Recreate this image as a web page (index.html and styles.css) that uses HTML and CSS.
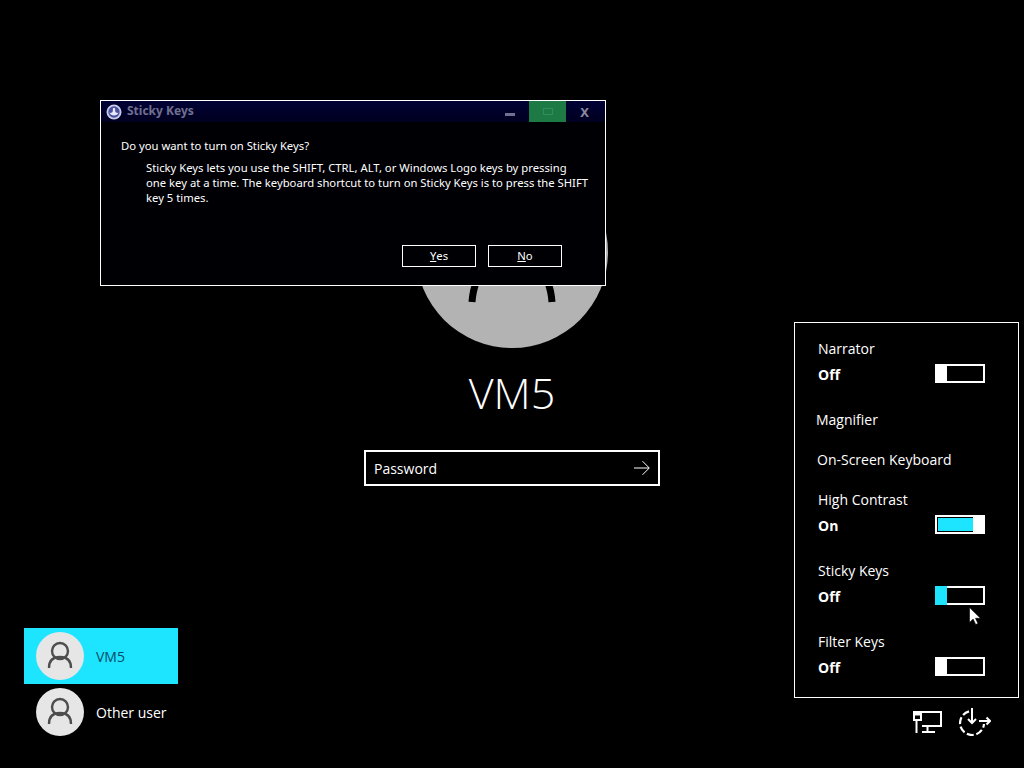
FILE: index.html
```html
<!DOCTYPE html>
<html lang="en">
<head>
<meta charset="utf-8">
<title>Sign in</title>
<link rel="stylesheet" href="styles.css">
</head>
<body>
<div class="screen">
  <aside class="users">
    <div class="user user-active">
      <span class="user-pic"><svg viewBox="0 0 48 48" width="48" height="48"><circle cx="24" cy="19" r="8" fill="none" stroke="#4d4d4d" stroke-width="2.4"/><path d="M13 36c0-8 4-11 11-11s11 3 11 11" fill="none" stroke="#4d4d4d" stroke-width="2.4"/></svg></span>
      <span class="user-name">VM5</span>
    </div>
    <div class="user">
      <span class="user-pic"><svg viewBox="0 0 48 48" width="48" height="48"><circle cx="24" cy="19" r="8" fill="none" stroke="#4d4d4d" stroke-width="2.4"/><path d="M13 36c0-8 4-11 11-11s11 3 11 11" fill="none" stroke="#4d4d4d" stroke-width="2.4"/></svg></span>
      <span class="user-name">Other user</span>
    </div>
  </aside>

  <main class="signin">
    <svg class="avatar" viewBox="0 0 192 192" width="192" height="192">
      <circle cx="96" cy="96" r="96" fill="#b3b3b3"/>
      <path d="M56 146C57 132 62 118 72 108M136 146C135 132 130 118 120 108" fill="none" stroke="#000" stroke-width="7"/>
    </svg>
    <h1 class="account">VM5</h1>
    <div class="password">
      <span>Password</span>
      <svg viewBox="0 0 16 16" width="16" height="16"><path d="M0 8h15M8.500 1.200 15.300 8l-6.800 6.800" fill="none" stroke="#fff" stroke-width="1"/></svg>
    </div>
  </main>

  <aside class="side">
    <section class="panel">
      <div class="item">
        <div class="item-label">Narrator</div>
        <div class="item-row"><b>Off</b><span class="toggle"><i class="thumb"></i></span></div>
      </div>
      <div class="link link-mag">Magnifier</div>
      <div class="link link-osk">On-Screen Keyboard</div>
      <div class="item">
        <div class="item-label">High Contrast</div>
        <div class="item-row"><b>On</b><span class="toggle toggle-on"><i class="thumb"></i></span></div>
      </div>
      <div class="item">
        <div class="item-label">Sticky Keys</div>
        <div class="item-row"><b>Off</b><span class="toggle toggle-hover"><i class="thumb"></i></span></div>
      </div>
      <div class="item">
        <div class="item-label">Filter Keys</div>
        <div class="item-row"><b>Off</b><span class="toggle"><i class="thumb"></i></span></div>
      </div>
    </section>
    <div class="tray">
      <svg viewBox="0 0 32 28" width="32" height="28" fill="none" stroke="#fff" stroke-width="2">
        <path d="M9 4h20v14H10"/>
        <path d="M2 4h7v8H2z" stroke-width="2"/>
        <path d="M2 6h7" stroke-width="3"/>
        <path d="M4.500 12v13M10 24h13M15.500 18v6"/>
      </svg>
      <svg viewBox="0 0 32 28" width="32" height="28" fill="none" stroke="#fff" stroke-width="2.200">
        <path d="M10 3.400A12 12 0 1 0 25 16" stroke-dasharray="7 2.700"/>
        <path d="M13 0v15M9 11l4 4 4-4" stroke-width="2"/>
        <path d="M20 13h11M27.500 9.500 31 13l-3.500 3.500" stroke-width="2"/>
      </svg>
    </div>
  </aside>

  <section class="dialog">
    <header class="titlebar">
      <svg class="title-icon" viewBox="0 0 16 16" width="16" height="16">
        <circle cx="8" cy="8" r="7.500" fill="#c9cde8"/>
        <circle cx="8" cy="8" r="5.700" fill="#4a50a0"/>
        <path d="M3.500 8.500c1 4 8 4 9 0-1 .8-2.500.5-3.200-1L9 4H7l-.3 3.500C6 9 4.500 9.300 3.500 8.500z" fill="#e6e8f8"/>
      </svg>
      <span class="title-text">Sticky Keys</span>
      <span class="win-min"></span>
      <span class="win-max"><i></i></span>
      <span class="win-close">X</span>
    </header>
    <div class="dialog-body">
      <p class="question">Do you want to turn on Sticky Keys?</p>
      <p class="explain">Sticky Keys lets you use the SHIFT, CTRL, ALT, or Windows Logo keys by pressing<br>one key at a time. The keyboard shortcut to turn on Sticky Keys is to press the SHIFT<br>key 5 times.</p>
    </div>
    <div class="dialog-actions">
      <span class="btn"><u>Y</u>es</span>
      <span class="btn"><u>N</u>o</span>
    </div>
  </section>

  <svg class="cursor" viewBox="0 0 12 18" width="12" height="18"><path d="M.5.5v15l3.600-3.400 2.600 5.400 2.300-1-2.500-5.200h5z" fill="#fff" stroke="#000" stroke-width=".6"/></svg>
</div>
</body>
</html>
```
FILE: styles.css
```css
* { box-sizing: border-box; }
html, body { margin: 0; padding: 0; background: #000; }
body { font-family: "Open Sans", "Noto Sans", sans-serif; color: #fff; }

.screen {
  position: relative;
  width: 1024px;
  height: 768px;
  overflow: hidden;
  display: grid;
  grid-template-columns: 364px 296px 364px;
  background: #000;
}

/* user list */
.users {
  align-self: end;
  padding: 0 0 28px 24px;
  display: flex;
  flex-direction: column;
}
.user {
  width: 154px;
  height: 56px;
  padding-left: 12px;
  display: flex;
  align-items: center;
  gap: 12px;
  font-size: 14px;
}
.user-active { background: #1de5ff; color: #0a4a68; }
.user-pic {
  width: 48px;
  height: 48px;
  border-radius: 50%;
  background: #e6e6e6;
  display: block;
}
.user-pic svg { display: block; }

/* centre column */
.signin {
  padding-top: 156px;
  display: flex;
  flex-direction: column;
  align-items: center;
}
.avatar { display: block; }
.account {
  margin: 16px 0 0;
  height: 60px;
  font-size: 43px;
  line-height: 58px;
  font-weight: 300;
}
.password {
  margin-top: 26px;
  width: 296px;
  height: 36px;
  border: 2px solid #fff;
  padding: 0 8px 0 8px;
  display: flex;
  align-items: center;
  justify-content: space-between;
  font-size: 14px;
}
.password svg { display: block; }

/* accessibility flyout */
.side {
  padding: 322px 5px 0 134px;
  display: flex;
  flex-direction: column;
}
.panel {
  height: 376px;
  border: 1px solid #fff;
  padding: 16px 33px 0 23px;
  font-size: 14px;
}
.item { height: 71px; }
.item-label { height: 20px; line-height: 20px; }
.item-row {
  margin-top: 4px;
  display: flex;
  justify-content: space-between;
  align-items: center;
  height: 22px;
}
.item-row b { font-weight: 700; }
.link { height: 40px; line-height: 20px; }
.link-mag { margin-left: -2px; }
.link-osk { margin-left: -1px; }

.toggle {
  display: block;
  position: relative;
  align-self: flex-start;
  margin-top: 1px;
  width: 50px;
  height: 19px;
  border: 2px solid #fff;
}
.thumb {
  position: absolute;
  left: -2px;
  top: -2px;
  width: 12px;
  height: 19px;
  background: #fff;
}
.toggle-on { background: #1de5ff; box-shadow: inset 0 0 0 1px #000; }
.toggle-on .thumb { left: auto; right: -2px; }
.toggle-hover .thumb { background: #1de5ff; }

.tray {
  margin-top: 10px;
  padding-left: 118px;
  display: flex;
  gap: 15px;
  align-items: flex-start;
}
.tray svg { display: block; }

/* dialog window */
.dialog {
  position: absolute;
  left: 100px;
  top: 100px;
  width: 506px;
  height: 186px;
  border: 1px solid #fff;
  background: #000004;
  font-size: 11.27px;
  font-family: "Noto Sans", "Open Sans", sans-serif;
}
.titlebar {
  height: 21px;
  background: linear-gradient(#000035, #000020);
  display: flex;
  align-items: center;
  padding: 0 0 0 5px;
  color: #70708f;
  font-size: 12px;
}
.title-icon { display: block; }
.title-text { margin-left: 5px; font-weight: 700; flex: 1; padding-bottom: 2px; }
.win-min { width: 10px; height: 3px; background: #70708f; margin: 5px 14px 0 0; }
.win-max {
  width: 37px;
  height: 21px;
  background: #1d7a45;
  display: flex;
  align-items: center;
  justify-content: center;
}
.win-max i { width: 10px; height: 7px; border: 1px solid #2f8f5a; display: block; }
.win-close { width: 37px; text-align: center; font-weight: 700; font-size: 13px; margin-right: 2px; color: #8a8a9e; }
.dialog-body { padding: 16px 0 0 20px; }
.question { margin: 0; line-height: 16px; }
.explain { margin: 6px 0 0 25px; line-height: 15px; white-space: nowrap; }
.dialog-actions {
  position: absolute;
  left: 301px;
  top: 144px;
  display: flex;
  gap: 12px;
}
.btn {
  width: 74px;
  height: 22px;
  border: 1px solid #fff;
  display: flex;
  align-items: center;
  justify-content: center;
  white-space: pre;
  padding-bottom: 1px;
}

.cursor { position: absolute; left: 969px; top: 607px; }
```
